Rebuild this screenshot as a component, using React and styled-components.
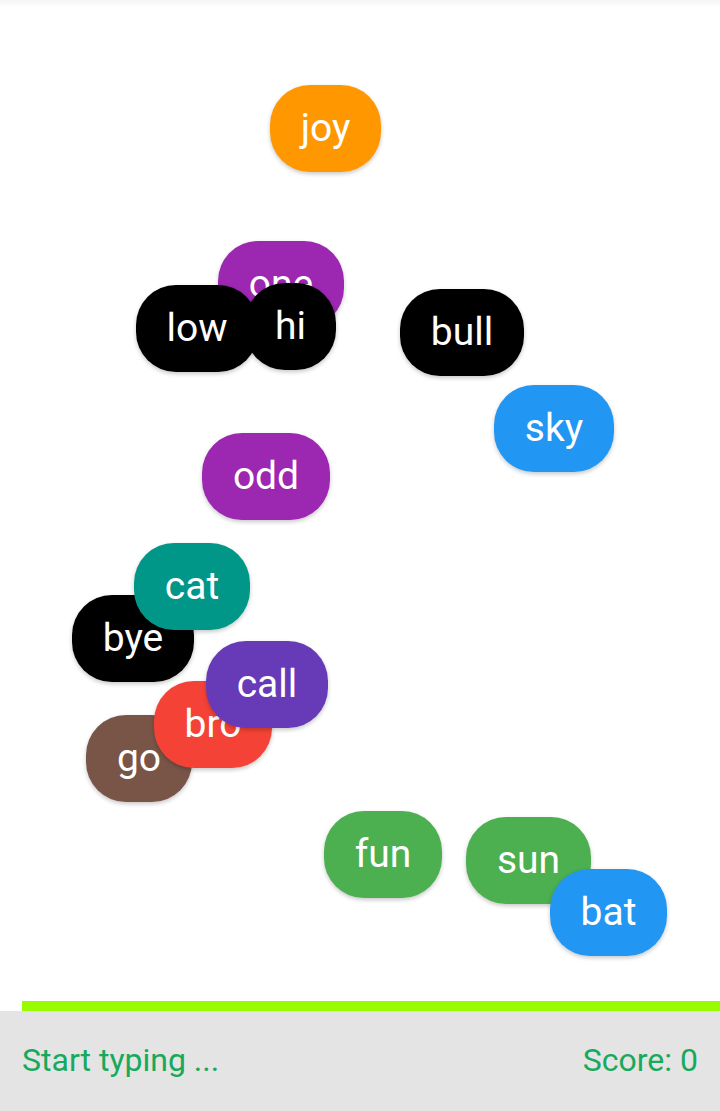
import styled, { createGlobalStyle } from "styled-components";

const GlobalStyle = createGlobalStyle`
  html, body {
    margin: 0;
    padding: 0;
    background: #ffffff;
  }
  * {
    box-sizing: border-box;
  }
`;

const Screen = styled.div`
  width: 720px;
  height: 1111px;
  display: flex;
  flex-direction: column;
  background: #ffffff;
  font-family: Roboto, "Noto Sans", sans-serif;
  overflow: hidden;
`;

const TopShade = styled.div`
  height: 8px;
  background: linear-gradient(#f5f5f5, #ffffff);
`;

const Playfield = styled.div`
  position: relative;
  flex: 1;
`;

const Bubble = styled.div`
  position: absolute;
  height: 87px;
  display: flex;
  align-items: center;
  justify-content: center;
  border-radius: 40px;
  background: ${(p) => p.$color};
  color: #ffffff;
  font-size: 39px;
  line-height: 1;
  white-space: nowrap;
  box-shadow: 0 2px 4px rgba(0, 0, 0, 0.22);
`;

const Progress = styled.div`
  height: 10px;
  margin-left: 22px;
  background: #99fb00;
`;

const Footer = styled.div`
  height: 100px;
  background: #e4e4e4;
  display: flex;
  align-items: center;
  justify-content: space-between;
  padding: 0 22px 2px;
  color: #17a95c;
  font-size: 32px;
`;

// word bubbles floating on the field (y is page coordinate, field starts at 8)
const words = [
  { text: "joy", color: "#ff9800", x: 270, y: 85, w: 111 },
  { text: "one", color: "#9c27b0", x: 218, y: 241, w: 126 },
  { text: "low", color: "#000000", x: 136, y: 285, w: 122 },
  { text: "hi", color: "#000000", x: 245, y: 283, w: 91 },
  { text: "bull", color: "#000000", x: 400, y: 289, w: 124 },
  { text: "sky", color: "#2196f3", x: 494, y: 385, w: 120 },
  { text: "odd", color: "#9c27b0", x: 202, y: 433, w: 128 },
  { text: "bye", color: "#000000", x: 72, y: 595, w: 122 },
  { text: "cat", color: "#009688", x: 134, y: 543, w: 116 },
  { text: "go", color: "#795548", x: 86, y: 715, w: 106 },
  { text: "bro", color: "#f44336", x: 154, y: 681, w: 118 },
  { text: "call", color: "#673ab7", x: 206, y: 641, w: 122 },
  { text: "fun", color: "#4caf50", x: 324, y: 811, w: 118 },
  { text: "sun", color: "#4caf50", x: 466, y: 817, w: 125 },
  { text: "bat", color: "#2196f3", x: 550, y: 869, w: 117 },
];

const App = () => {
  return (
    <>
      <GlobalStyle />
      <Screen>
        <TopShade />
        <Playfield>
          {words.map((word) => (
            <Bubble
              key={word.text}
              $color={word.color}
              style={{ left: word.x, top: word.y - 8, width: word.w }}
            >
              {word.text}
            </Bubble>
          ))}
        </Playfield>
        <Progress />
        <Footer>
          <span>Start typing ...</span>
          <span>Score: 0</span>
        </Footer>
      </Screen>
    </>
  );
};

export default App;
